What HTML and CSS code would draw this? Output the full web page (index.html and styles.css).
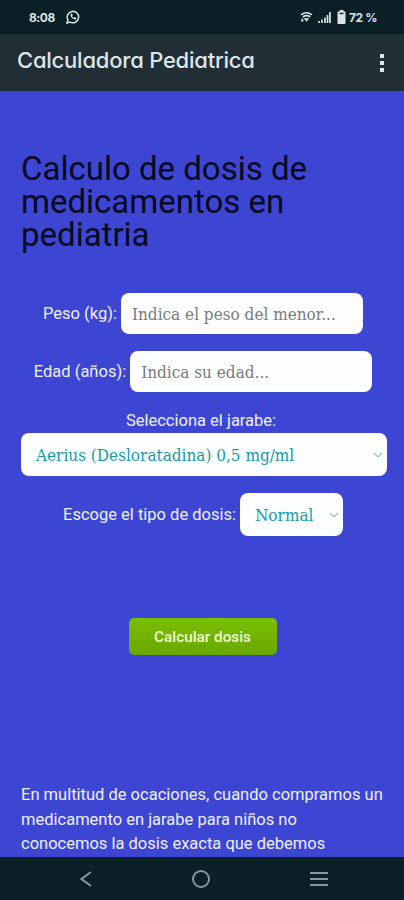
FILE: index.html
```html
<!DOCTYPE html>
<html lang="es">
<head>
  <meta charset="UTF-8" />
  <meta name="viewport" content="width=device-width, initial-scale=1.0"/>
  <title>Calculadora Pediatrica</title>
  <link rel="stylesheet" href="styles.css">
</head>
<body>

<div class="status-bar">
  <span class="time">8:08</span>
  <svg class="chat-icon" viewBox="0 0 14 14" width="14" height="14">
    <path d="M1 13l.9-3.2A5.7 5.7 0 1 1 4.200 12.100z" fill="none" stroke="currentColor" stroke-width="1.500"/>
    <path d="M4.600 4c-.7 2.600 2.700 6 5.400 5.400l.4-1.500-1.700-.8-.8.8C6.900 7.500 6.400 7 6 6.100l.8-.8L6.100 3.600z" fill="currentColor"/>
  </svg>
  <div class="status-right">
    <svg viewBox="0 0 14 12" width="13" height="12">
      <path d="M1.200 3.600Q7-.8 12.800 3.600M3 5.800q4-2.600 8 0" fill="none" stroke="currentColor" stroke-width="1.700"/>
      <path d="M4 7.400h6L7 11z" fill="currentColor"/>
      <path d="M2.500 7v4M1 9l1.500 2L4 9" fill="none" stroke="currentColor"/>
    </svg>
    <svg class="signal-icon" viewBox="0 0 13 11" width="13" height="11">
      <path d="M1 9v2M4 7.500V11M7 5.500V11M9.500 3v8M12 0v11" stroke="currentColor" stroke-width="1.700"/>
    </svg>
    <svg class="battery-icon" viewBox="0 0 9 14" width="9" height="14">
      <path d="M2.500 0h4v1.500h1a1 1 0 0 1 1 1V13a1 1 0 0 1-1 1h-6a1 1 0 0 1-1-1V2.500a1 1 0 0 1 1-1h1z" fill="currentColor"/>
      <path d="M2.500 3.500h4" stroke="#0a2026" stroke-width="1.300"/>
    </svg>
    <span class="battery-text">72 %</span>
  </div>
</div>

<header class="app-bar">
  <span class="app-title">Calculadora Pediatrica</span>
  <svg viewBox="0 0 4 18" width="4" height="18">
    <path d="M0 0h4v4H0zM0 7h4v4H0zM0 14h4v4H0z" fill="currentColor"/>
  </svg>
</header>

<main class="content">
  <h1>Calculo de dosis de medicamentos en pediatria</h1>

  <form class="dose-form">
    <div class="row">
      <label for="peso">Peso (kg):</label>
      <input type="text" class="input-field" id="peso" placeholder="Indica el peso del menor...">
    </div>
    <div class="row row-age">
      <label for="edad">Edad (años):</label>
      <input type="text" class="input-field" id="edad" placeholder="Indica su edad...">
    </div>
    <label class="syrup-label" for="jarabe">Selecciona el jarabe:</label>
    <div class="select-box syrup-box">
      <select id="jarabe"><option>Aerius (Desloratadina) 0,5 mg/ml</option></select>
      <svg class="arrow" viewBox="0 0 10 6" width="10" height="6"><path d="M1 1l4 4 4-4"/></svg>
    </div>
    <div class="row row-type">
      <label for="tipo">Escoge el tipo de dosis:</label>
      <div class="select-box type-box">
        <select id="tipo"><option>Normal</option></select>
        <svg class="arrow" viewBox="0 0 10 6" width="10" height="6"><path d="M1 1l4 4 4-4"/></svg>
      </div>
    </div>
    <button type="button" class="calc-button">Calcular dosis</button>
  </form>

  <p class="info">En multitud de ocaciones, cuando compramos un medicamento en jarabe para niños no conocemos la dosis exacta que debemos</p>
</main>

<nav class="nav-bar">
  <svg viewBox="0 0 12 16" width="12" height="16"><path d="M11 1L1.500 8l9.500 7"/></svg>
  <svg viewBox="0 0 20 20" width="20" height="20"><circle cx="10" cy="10" r="8"/></svg>
  <svg viewBox="0 0 18 16" width="18" height="16"><path d="M0 2h18M0 8h18M0 14h18"/></svg>
</nav>

</body>
</html>
```
FILE: styles.css
```css
* {
  box-sizing: border-box;
}

body {
  margin: 0;
  height: 900px;
  display: flex;
  flex-direction: column;
  overflow: hidden;
  background-color: #3d46d3;
  font-family: Roboto, sans-serif;
  color: #eef0ff;
}

.status-bar {
  height: 34px;
  flex-shrink: 0;
  display: flex;
  align-items: center;
  padding: 0 28px 0 29px;
  background-color: #0a2026;
  color: #dce3e6;
  font-family: Inter, sans-serif;
  font-size: 12px;
  font-weight: 700;
}

.time {
  width: 25px;
  letter-spacing: -0.5px;
}

.chat-icon {
  margin-left: 12px;
}

.status-right {
  margin-left: auto;
  display: flex;
  align-items: center;
}

.signal-icon {
  margin-left: 5px;
}

.battery-icon {
  margin: 0 3px 0 6px;
}

.battery-text {
  width: 27px;
  white-space: nowrap;
  letter-spacing: -0.4px;
}

.app-bar {
  height: 57px;
  flex-shrink: 0;
  display: flex;
  align-items: center;
  justify-content: space-between;
  padding: 0 20px 0 17px;
  background-color: #212e36;
  color: #dce5e9;
}

.app-title {
  padding-bottom: 5px;
  font-family: Inter, sans-serif;
  font-feature-settings: "cv11";
  font-size: 22px;
  font-weight: 500;
  letter-spacing: -0.22px;
}

.content {
  flex: 1;
  min-height: 0;
  overflow: hidden;
  padding: 61px 17px 0 21px;
}

h1 {
  margin: 0;
  color: #050a20;
  font-size: 33px;
  font-weight: 400;
  line-height: 33px;
}

.dose-form {
  display: flex;
  flex-direction: column;
  align-items: center;
  margin-top: 42px;
  font-size: 16.500px;
}

.row {
  display: flex;
  align-items: center;
  gap: 4px;
  margin-right: 2px;
  white-space: nowrap;
}

.row-age {
  margin-top: 17px;
}

.row-type {
  margin-top: 17px;
}

.input-field {
  width: 242px;
  height: 41px;
  padding: 0 11px;
  border: none;
  border-radius: 8px;
  background-color: #fdfefe;
  font-family: "DejaVu Serif Condensed", "DejaVu Serif", serif;
  font-size: 17px;
}

.input-field::placeholder {
  color: #777b7b;
}

.syrup-label {
  margin: 19px 6px 0 0;
  line-height: 20px;
}

.select-box {
  height: 43px;
  display: flex;
  align-items: center;
  padding: 0 4px 0 15px;
  border-radius: 8px;
  background-color: #fdfefe;
}

.syrup-box {
  width: 100%;
  margin-top: 2px;
}

.type-box {
  width: 103px;
}

.select-box select {
  flex: 1;
  min-width: 0;
  padding: 0;
  border: none;
  appearance: none;
  background: none;
  color: #159aae;
  font-family: "DejaVu Serif Condensed", "DejaVu Serif", serif;
  font-size: 17px;
}

.arrow {
  flex-shrink: 0;
  fill: none;
  stroke: #8cc4c6;
  stroke-width: 1.2;
}

.calc-button {
  width: 148px;
  height: 37px;
  margin: 82px 3px 0 0;
  border: none;
  border-radius: 5px;
  background: linear-gradient(#7ac000, #68a700);
  color: #eefbdc;
  font-family: Roboto, sans-serif;
  font-size: 15.300px;
  font-weight: 500;
}

.info {
  margin: 128px -10px 0 0;
  padding-right: 10px;
  font-size: 16.500px;
  line-height: 24.700px;
}

.nav-bar {
  height: 43px;
  flex-shrink: 0;
  display: flex;
  align-items: center;
  justify-content: space-between;
  padding: 1px 76px 0 80px;
  background-color: #0b1f26;
}

.nav-bar svg {
  fill: none;
  stroke: #87969a;
  stroke-width: 2;
}
```
